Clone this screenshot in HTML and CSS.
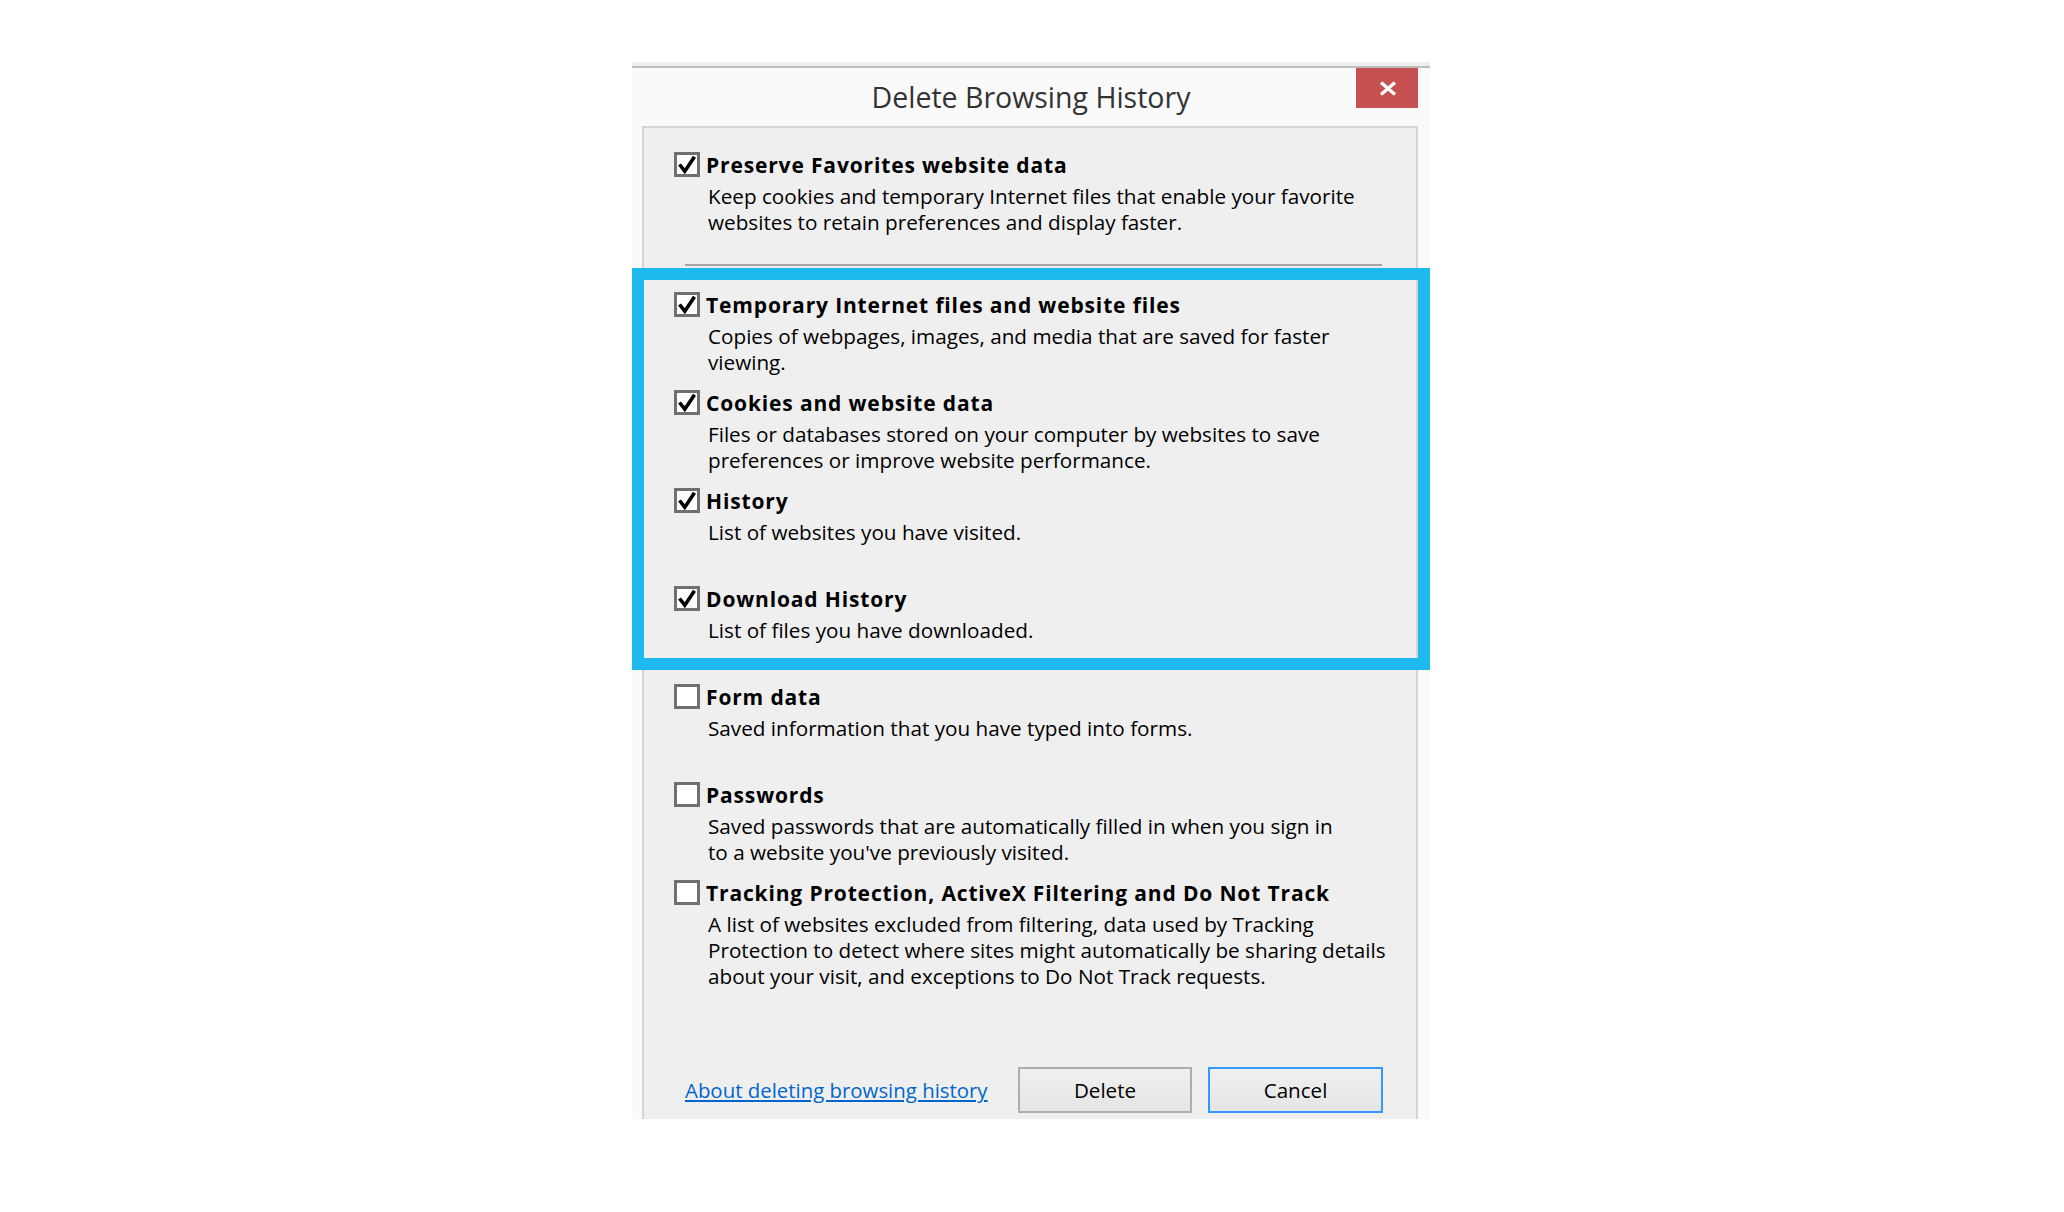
FILE: index.html
```html
<!DOCTYPE html>
<html lang="en">
<head>
<meta charset="utf-8">
<title>Delete Browsing History</title>
<link rel="stylesheet" href="styles.css">
</head>
<body>
<div class="dialog">
  <div class="titlebar">
    <div class="title">Delete Browsing History</div>
    <button class="close" aria-label="Close">
      <svg width="18" height="15" viewBox="0 0 18 15"><path d="M2 1.5 L16 13.5 M16 1.5 L2 13.5" stroke="#fff" stroke-width="3.4" fill="none"/></svg>
    </button>
  </div>
  <div class="panel">
    <div class="item item-first">
      <div class="row"><span class="cb checked"><svg width="20" height="19" viewBox="0 0 20 19"><path d="M2.5 9.5 L7.8 16.2 L17.5 1.8" stroke="#000" stroke-width="3.6" fill="none"/></svg></span><span class="label">Preserve Favorites website data</span></div>
      <p class="desc">Keep cookies and temporary Internet files that enable your favorite<br>websites to retain preferences and display faster.</p>
    </div>
    <div class="sep"></div>
    <div class="item">
      <div class="row"><span class="cb checked"><svg width="20" height="19" viewBox="0 0 20 19"><path d="M2.5 9.5 L7.8 16.2 L17.5 1.8" stroke="#000" stroke-width="3.6" fill="none"/></svg></span><span class="label">Temporary Internet files and website files</span></div>
      <p class="desc">Copies of webpages, images, and media that are saved for faster<br>viewing.</p>
    </div>
    <div class="item">
      <div class="row"><span class="cb checked"><svg width="20" height="19" viewBox="0 0 20 19"><path d="M2.5 9.5 L7.8 16.2 L17.5 1.8" stroke="#000" stroke-width="3.6" fill="none"/></svg></span><span class="label">Cookies and website data</span></div>
      <p class="desc">Files or databases stored on your computer by websites to save<br>preferences or improve website performance.</p>
    </div>
    <div class="item">
      <div class="row"><span class="cb checked"><svg width="20" height="19" viewBox="0 0 20 19"><path d="M2.5 9.5 L7.8 16.2 L17.5 1.8" stroke="#000" stroke-width="3.6" fill="none"/></svg></span><span class="label">History</span></div>
      <p class="desc">List of websites you have visited.</p>
    </div>
    <div class="item">
      <div class="row"><span class="cb checked"><svg width="20" height="19" viewBox="0 0 20 19"><path d="M2.5 9.5 L7.8 16.2 L17.5 1.8" stroke="#000" stroke-width="3.6" fill="none"/></svg></span><span class="label">Download History</span></div>
      <p class="desc">List of files you have downloaded.</p>
    </div>
    <div class="item">
      <div class="row"><span class="cb"></span><span class="label">Form data</span></div>
      <p class="desc">Saved information that you have typed into forms.</p>
    </div>
    <div class="item">
      <div class="row"><span class="cb"></span><span class="label">Passwords</span></div>
      <p class="desc">Saved passwords that are automatically filled in when you sign in<br>to a website you've previously visited.</p>
    </div>
    <div class="item">
      <div class="row"><span class="cb"></span><span class="label">Tracking Protection, ActiveX Filtering and Do Not Track</span></div>
      <p class="desc">A list of websites excluded from filtering, data used by Tracking<br>Protection to detect where sites might automatically be sharing details<br>about your visit, and exceptions to Do Not Track requests.</p>
    </div>
    <div class="footer">
      <a class="link" href="#">About deleting browsing history</a>
      <div class="buttons">
        <button class="btn">Delete</button>
        <button class="btn btn-focus">Cancel</button>
      </div>
    </div>
  </div>
  <div class="highlight"></div>
</div>
</body>
</html>
```
FILE: styles.css
```css
html, body {
  margin: 0;
  padding: 0;
  background: #ffffff;
}
body {
  font-family: "Open Sans", "Noto Sans", sans-serif;
  color: #000;
}
.dialog {
  position: relative;
  width: 798px;
  height: 1051px;
  margin: 66px 0 0 632px;
  background: #fafafa;
  border-top: 2px solid #bdbdbd;
  box-shadow: 0 -4px 0 #efefef;
  display: flex;
  flex-direction: column;
}
.titlebar {
  height: 58px;
  display: grid;
  grid-template-columns: 1fr auto 1fr;
  align-items: start;
}
.title {
  grid-column: 2;
  font-size: 28.5px;
  line-height: 58px;
  color: #333;
}
.close {
  grid-column: 3;
  justify-self: end;
  margin-right: 12px;
  width: 62px;
  height: 40px;
  border: 0;
  padding: 0;
  background: #c75050;
  display: flex;
  align-items: center;
  justify-content: center;
}
.close svg { display: block; margin-left: 2px; }
.panel {
  flex: 1;
  margin: 0 12px 0 10px;
  border: 2px solid #d5d5d5;
  border-bottom: 0;
  background: #efefef;
  padding: 24px 0 6px 30px;
  display: flex;
  flex-direction: column;
}
.item {
  height: 98px;
  flex: none;
}
.item-first { height: 112px; }
.sep {
  flex: none;
  height: 2px;
  width: 697px;
  margin: 0 0 26px 11px;
  background: #a5a5a5;
}
.row {
  display: flex;
  align-items: flex-start;
  height: 26px;
}
.cb {
  box-sizing: border-box;
  width: 26px;
  height: 25px;
  border: 3px solid #707070;
  background: #fff;
  flex: none;
  display: flex;
  align-items: center;
  justify-content: center;
}
.cb svg { display: block; }
.label {
  margin-left: 6px;
  font-weight: 700;
  font-size: 21px;
  letter-spacing: 0.85px;
  line-height: 25px;
  padding-top: 1px;
  white-space: nowrap;
}
.desc {
  margin: 5px 0 0 34px;
  font-size: 20.7px;
  line-height: 26px;
  white-space: nowrap;
}
.footer {
  margin-top: auto;
  display: flex;
  align-items: baseline;
  justify-content: space-between;
  padding: 0 33px 0 11px;
}
.link {
  color: #0066cc;
  font-size: 20.4px;
  text-decoration: underline;
}
.buttons {
  display: flex;
  gap: 16px;
  align-items: baseline;
}
.btn {
  box-sizing: border-box;
  width: 174px;
  height: 46px;
  font-family: "Open Sans", "Noto Sans", sans-serif;
  font-size: 20.6px;
  color: #000;
  background: linear-gradient(#f0f0f0, #e5e5e5);
  border: 2px solid #adadad;
  padding: 0;
}
.btn-focus {
  width: 175px;
  border-color: #3399ff;
}
.highlight {
  position: absolute;
  left: 0;
  top: 200px;
  width: 798px;
  height: 402px;
  box-sizing: border-box;
  border: 12px solid #1fbaed;
  pointer-events: none;
}
```
